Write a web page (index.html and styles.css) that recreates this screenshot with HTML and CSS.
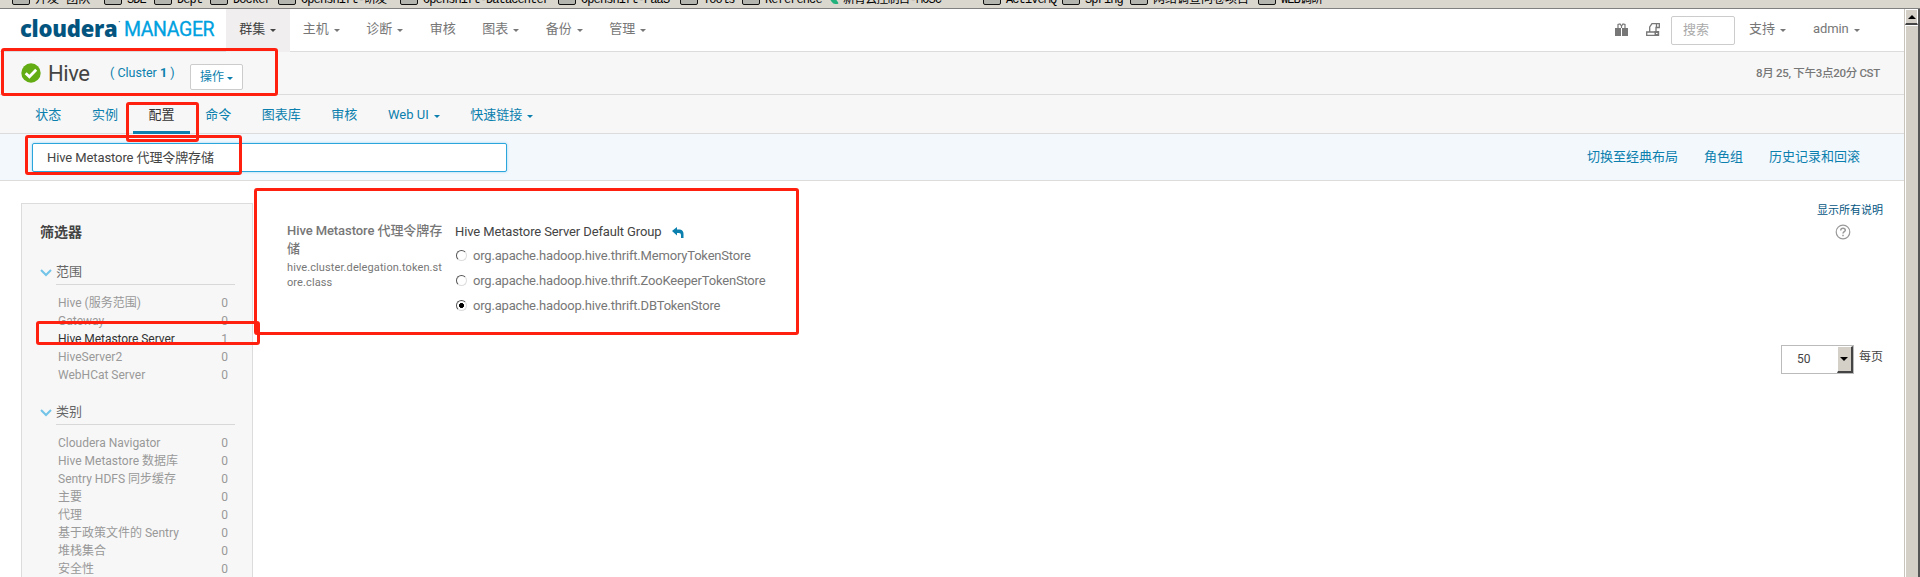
FILE: index.html
```html
<!DOCTYPE html>
<html lang="zh-CN">
<head>
<meta charset="utf-8">
<title>Hive - Cloudera Manager</title>
<link rel="stylesheet" href="styles.css">
</head>
<body>
<div class="bookmarks">
  <span class="bm">开发—团队</span><span class="bm">SDE</span><span class="bm">Dept</span><span class="bm">Docker</span><span class="bm">Openshift-研发</span><span class="bm">Openshift-Datacenter</span><span class="bm">Openshift-PaaS</span><span class="bm">Tools</span><span class="bm">Reference</span><span class="bm site">新青云控制台-MOSC</span><span class="bm">ActiveMQ</span><span class="bm">Spring</span><span class="bm">网络调查问卷项目</span><span class="bm">WEB调研</span>
</div>
<div class="window">
  <div class="page">
    <header class="topbar">
      <div class="logo"><span class="brand">cloudera</span><span class="tm">·</span><span class="product">MANAGER</span></div>
      <nav class="nav">
        <a class="active">群集<i class="caret"></i></a><a>主机<i class="caret"></i></a><a>诊断<i class="caret"></i></a><a>审核</a><a>图表<i class="caret"></i></a><a>备份<i class="caret"></i></a><a>管理<i class="caret"></i></a>
      </nav>
      <div class="tools">
        <svg class="gift" width="14" height="14" viewBox="0 0 14 14"><path d="M0 5h6v8H0zM7 5h6v8H7z" fill="#777"/><path d="M3 5V1.500l2-.5 1.500 2L8 1l2 .5V5M6.500 3v2" fill="none" stroke="#777" stroke-width="1.200"/></svg>
        <svg class="script" width="15" height="14" viewBox="0 0 15 14"><path d="M3.700 9V4L6 .7h7.300V4.500H10V8M10.500 4.500V1M9 9H.7v3.300H9" fill="none" stroke="#777" stroke-width="1.300"/><path d="M8.500 8h4.700v5H8.500z" fill="#777"/><path d="M10 10h1.500v1H10z" fill="#fff"/></svg>
        <div class="find">搜索</div>
        <a class="support">支持<i class="caret"></i></a>
        <a class="user">admin<i class="caret"></i></a>
      </div>
    </header>
    <div class="titlebar">
      <svg class="ok" width="20" height="20" viewBox="0 0 20 20"><circle cx="10" cy="10" r="9.700" fill="#64ac14"/><path d="M4.700 10.200l3.700 3.600 6.800-7" fill="none" stroke="#fff" stroke-width="2.800"/></svg>
      <h1>Hive</h1>
      <a class="cluster">( Cluster <b>1</b> )</a>
      <button class="actions">操作<i class="caret"></i></button>
      <time>8月 25, 下午3点20分 CST</time>
    </div>
    <nav class="tabs">
      <a>状态</a><a>实例</a><a class="current">配置</a><a>命令</a><a>图表库</a><a>审核</a><a class="web">Web UI<i class="caret"></i></a><a>快速链接<i class="caret"></i></a>
    </nav>
    <div class="searchband">
      <div class="query">Hive Metastore 代理令牌存储</div>
      <div class="links"><a>切换至经典布局</a><a>角色组</a><a>历史记录和回滚</a></div>
    </div>
    <main class="content">
      <aside class="filters">
        <h2>筛选器</h2>
        <section>
          <h3><svg width="12" height="8" viewBox="0 0 12 8"><path d="M1 1l5 5 5-5" fill="none" stroke="#72c4e8" stroke-width="2"/></svg><span>范围</span></h3>
          <ul>
            <li>Hive (服务范围)<em>0</em></li>
            <li>Gateway<em>0</em></li>
            <li class="sel">Hive Metastore Server<em>1</em></li>
            <li>HiveServer2<em>0</em></li>
            <li>WebHCat Server<em>0</em></li>
          </ul>
        </section>
        <section>
          <h3><svg width="12" height="8" viewBox="0 0 12 8"><path d="M1 1l5 5 5-5" fill="none" stroke="#72c4e8" stroke-width="2"/></svg><span>类别</span></h3>
          <ul>
            <li>Cloudera Navigator<em>0</em></li>
            <li>Hive Metastore 数据库<em>0</em></li>
            <li>Sentry HDFS 同步缓存<em>0</em></li>
            <li>主要<em>0</em></li>
            <li>代理<em>0</em></li>
            <li>基于政策文件的 Sentry<em>0</em></li>
            <li>堆栈集合<em>0</em></li>
            <li>安全性<em>0</em></li>
          </ul>
        </section>
      </aside>
      <div class="prop">
        <div class="name"><b>Hive Metastore 代理令牌存储</b><small>hive.cluster.delegation.token.st<br>ore.class</small></div>
        <div class="value">
          <div class="group">Hive Metastore Server Default Group<svg width="12" height="12" viewBox="0 0 12 12"><path d="M0 4L5 0v2.500h3Q11.500 3 11.500 7v4H9V8Q9 6 7 6H5v2.500z" fill="#0b7fad"/></svg></div>
          <label><i class="radio"></i>org.apache.hadoop.hive.thrift.MemoryTokenStore</label>
          <label><i class="radio"></i>org.apache.hadoop.hive.thrift.ZooKeeperTokenStore</label>
          <label><i class="radio on"></i>org.apache.hadoop.hive.thrift.DBTokenStore</label>
        </div>
      </div>
      <div class="side">
        <a>显示所有说明</a>
        <svg width="16" height="16" viewBox="0 0 16 16"><circle cx="8" cy="8" r="6.800" fill="none" stroke="#999" stroke-width="1.200"/><path d="M5.700 6.500Q5.800 4.300 8 4.300T10.300 6.200C10.300 7.800 8 7.700 8 9.600M8 10.700v1.600" fill="none" stroke="#999" stroke-width="1.500"/></svg>
        <div class="pager"><div class="select"><span>50</span><i class="drop"></i></div>每页</div>
      </div>
    </main>
  </div>
  <div class="scrollbar"><div class="up"></div><div class="thumb"></div></div>
</div>
<div class="mark m1"></div><div class="mark m2"></div><div class="mark m3"></div><div class="mark m4"></div><div class="mark m5"></div>
</body>
</html>
```
FILE: styles.css
```css
* { box-sizing: border-box; }
body { margin: 0; width: 1920px; height: 577px; overflow: hidden; background: #fff; font: 13px/18px Roboto, "Noto Sans CJK SC", sans-serif; color: #777; position: relative; }
h1, h2, h3, ul { margin: 0; padding: 0; font-weight: normal; list-style: none; }
i, em { font-style: normal; }
.caret { display: inline-block; border: 3px solid transparent; border-top-color: currentColor; border-bottom: 0; margin-left: 5px; vertical-align: 1px; }

/* browser bookmarks strip */
.bookmarks { height: 9px; overflow: hidden; display: flex; align-items: flex-end; padding-left: 12px; background: #dad7cf; border-bottom: 1px solid #808080; font: 12px/14px "Liberation Mono", "Noto Sans CJK SC", monospace; color: #000; }
.bm { flex: none; display: flex; white-space: nowrap; height: 14px; margin-bottom: 1px; line-height: 14px; letter-spacing: -.9px; }
.bm::before { content: ""; flex: none; width: 16px; height: 12px; margin: -2px 5px 0 0; background: #b5b5b0; border: 1px solid #111; border-radius: 2px; }
.bm.site::before { background: #22b07d; border: 0; width: 6px; height: 12px; transform: skewX(35deg); margin: -1px 8px 0 3px; }
.bm:nth-child(1) { width: 92px; letter-spacing: 0; }
.bm:nth-child(2) { width: 50px; }
.bm:nth-child(3) { width: 56px; }
.bm:nth-child(4) { width: 68px; }
.bm:nth-child(5) { width: 122px; }
.bm:nth-child(6) { width: 158px; }
.bm:nth-child(7) { width: 122px; }
.bm:nth-child(8) { width: 62px; }
.bm:nth-child(9) { width: 84px; }
.bm:nth-child(10) { width: 157px; }
.bm:nth-child(11) { width: 79px; }
.bm:nth-child(12) { width: 68px; }
.bm:nth-child(13) { width: 128px; letter-spacing: 0; }

.window { display: flex; height: 568px; }
.page { width: 1904px; display: flex; flex-direction: column; }
.topbar { height: 43px; border-bottom: 1px solid #dcdcdc; display: flex; flex: none; }
.logo { width: 226px; padding-left: 20px; white-space: nowrap; line-height: 39px; display: flex; flex: none; }
.brand { font: 800 22px/38px "Open Sans", sans-serif; color: #03557f; letter-spacing: -.25px; width: 98px; }
.tm { width: 6px; color: #03557f; font-size: 10px; line-height: 28px; }
.product { font: 19.500px/41px Roboto, sans-serif; color: #00a1df; letter-spacing: -.4px; -webkit-text-stroke: .3px #00a1df; }
.nav { display: flex; line-height: 40px; }
.nav a { padding: 0 13.250px; height: 43px; white-space: nowrap; }
.nav .active { background: #f0eeee; color: #444; }
.tools { margin-left: auto; display: flex; width: 289px; flex: none; }
.gift { margin: 14px 17px 0 0; }
.script { margin: 14px 10px 0 0; }
.find { width: 64px; height: 29px; margin: 7px 14px 0 0; border: 1px solid #ccc; border-radius: 2px; padding-left: 11px; line-height: 25px; color: #aaa; }
.support { width: 64px; line-height: 40px; }
.user { line-height: 40px; letter-spacing: -.1px; }

.titlebar { height: 43px; background: #f7f7f7; border-bottom: 1px solid #dcdcdc; display: flex; flex: none; padding: 0 24px 0 21px; }
.ok { margin: 11px 7px 0 0; }
h1 { font-size: 22px; line-height: 43px; width: 62px; color: #444; letter-spacing: -.4px; }
.cluster { color: #0b7fad; line-height: 41px; width: 80px; font-size: 12.500px; letter-spacing: 0; }
.actions { width: 53px; height: 26px; margin-top: 12px; padding: 0; border: 1px solid #ccc; border-radius: 2px; background: #fff; color: #0b7fad; font: 12px/22px Roboto, "Noto Sans CJK SC", sans-serif; }
.actions .caret { margin-left: 3px; }
time { margin-left: auto; font-size: 11.500px; line-height: 43px; font-weight: 500; letter-spacing: -.3px; }

.tabs { height: 39px; background: #f7f7f7; border-bottom: 1px solid #dcdcdc; display: flex; flex: none; padding-left: 20px; color: #0b7fad; }
.tabs a { height: 39px; line-height: 39px; padding: 0 15.300px; white-space: nowrap; }
.tabs .current { color: #333; border-bottom: 3px solid #0b7fad; }

.searchband { height: 47px; background: #f3f8fd; border-bottom: 1px solid #dcdcdc; display: flex; flex: none; padding: 9px 44px 0 32px; justify-content: space-between; }
.query { width: 475px; height: 29px; padding-left: 14px; border: 1px solid #2ba6dc; border-radius: 2px; background: #fff; box-shadow: 0 0 3px #9fd6ef; line-height: 27px; color: #444; letter-spacing: -.1px; }
.links { display: flex; gap: 26px; line-height: 28px; color: #0b7fad; }

.content { display: flex; align-items: flex-start; padding-left: 21px; }
.filters { width: 232px; height: 400px; margin-top: 22px; background: #f7f7f7; border: 1px solid #dcdcdc; padding: 18px 17px 0 18px; font-size: 12px; flex: none; }
.filters h2 { font-size: 14px; font-weight: bold; line-height: 20px; color: #444; }
.filters section { padding-top: 19px; }
.filters section + section { padding-top: 16px; }
.filters h3 { display: flex; align-items: center; gap: 4px; font-size: 13px; line-height: 24px; color: #666; }
.filters h3 svg { flex: none; }
.filters h3 span { flex: 1; border-bottom: 1px solid #d8d8d8; height: 24px; line-height: 22px; }
.filters ul { padding: 9px 7px 0 18px; }
.filters li { display: flex; justify-content: space-between; line-height: 18px; height: 18px; color: #999; }
.filters section:first-of-type ul { padding-bottom: 1px; }
.filters .sel { color: #333; letter-spacing: -.05px; }
.filters .sel em { color: #999; }

.prop { display: flex; margin: 40px 0 0 34px; }
.name { width: 157px; margin-right: 11px; padding-top: 1px; }
.name b { display: block; font-weight: 500; line-height: 18px; color: #777; letter-spacing: -.08px; }
.name small { display: block; font-size: 11px; line-height: 15px; padding-top: 2px; white-space: nowrap; letter-spacing: .1px; }
.value { letter-spacing: -.19px; white-space: nowrap; }
.group { color: #444; line-height: 20px; padding-top: 1px; margin-bottom: 1px; letter-spacing: -.12px; }
.group svg { margin-left: 10px; vertical-align: -3px; }
.value label { display: flex; align-items: center; height: 25px; }
.radio { width: 11px; height: 11px; border: 1px solid #555; border-right-color: #ddd; border-bottom-color: #ddd; border-radius: 50%; margin: 0 6px 0 1px; }
.radio.on { background: radial-gradient(#000 2.200px, #fff 2.700px); }
.side { margin-left: auto; padding: 19px 21px 0 0; display: flex; flex-direction: column; align-items: flex-end; }
.side > a { font-size: 11px; color: #03557f; line-height: 22px; }
.side > svg { margin: 2px 32px 0 0; }
.pager { margin-top: 105px; display: flex; gap: 5px; color: #444; font-size: 12px; line-height: 25px; }
.select { width: 73px; height: 29px; border: 1px solid #bbb; display: flex; justify-content: space-between; line-height: 27px; padding-left: 15px; }
.drop { width: 16px; background: #d4d0c8; border: 1px solid #fff; border-right: 2px solid #444; border-bottom: 2px solid #444; display: grid; place-items: center; }
.drop::before { content: ""; border: 4px solid transparent; border-top-color: #000; border-bottom: 0; }

.scrollbar { width: 16px; border-left: 1px solid #c8c4bc; border-right: 2px solid #555; background: #d4d0c8; display: flex; flex-direction: column; }
.up { height: 16px; border: 1px solid #fff; border-bottom: 2px solid #444; display: grid; place-items: center; }
.up::before { content: ""; border: 4px solid transparent; border-bottom-color: #000; border-top: 0; }
.thumb { flex: 1; border-top: 1px solid #fff; border-left: 1px solid #fff; }

/* red annotation boxes drawn over the page */
.mark { position: absolute; border: 3px solid #ff2010; border-radius: 3px; }
.m1 { left: 1px; top: 48px; width: 277px; height: 48px; }
.m2 { left: 126px; top: 102px; width: 73px; height: 40px; }
.m3 { left: 25px; top: 135px; width: 217px; height: 40px; }
.m4 { left: 254px; top: 188px; width: 545px; height: 147px; }
.m5 { left: 36px; top: 321px; width: 224px; height: 24px; }
```
